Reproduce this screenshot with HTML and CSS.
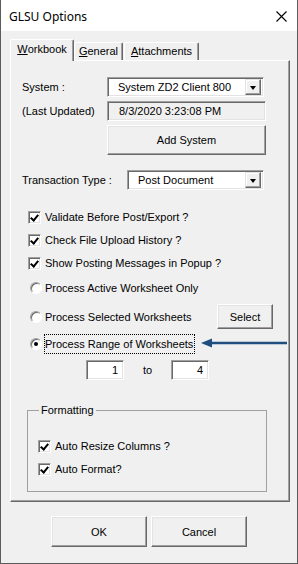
FILE: index.html
```html
<!DOCTYPE html>
<html lang="en">
<head>
  <meta charset="UTF-8" />
  <title>GLSU Options</title>
  <link rel="stylesheet" href="styles.css">
</head>
<body>
  <div class="window">
    <div class="titlebar">
      <span class="title">GLSU Options</span>
      <svg class="close" width="11" height="11" viewBox="0 0 11 11">
        <path d="M0.5 0.5 L10.5 10.5 M10.5 0.5 L0.5 10.5" stroke="#000" stroke-width="1.1" fill="none" />
      </svg>
    </div>

    <div class="client">
      <div class="tabs">
        <div class="tab active"><u>W</u>orkbook</div>
        <div class="tab tab-general"><u>G</u>eneral</div>
        <div class="tab tab-attach"><u>A</u>ttachments</div>
      </div>

      <div class="page">
        <div class="field-grid">
          <span class="label">System :</span>
          <div class="combo combo-system">
            <span class="combo-text">System ZD2 Client 800</span>
            <span class="drop"><span class="tri"></span></span>
          </div>

          <span class="label">(Last Updated)</span>
          <div class="textbox disabled">8/3/2020 3:23:08 PM</div>

          <span></span>
          <button class="btn btn-add">Add System</button>
        </div>

        <div class="trans-row">
          <span class="label trans-label">Transaction Type :</span>
          <div class="combo combo-trans">
            <span class="combo-text">Post Document</span>
            <span class="drop"><span class="tri"></span></span>
          </div>
        </div>

        <div class="options">
          <label class="opt check-row first">
            <span class="checkbox checked"></span>Validate Before Post/Export ?
          </label>
          <label class="opt check-row">
            <span class="checkbox checked"></span>Check File Upload History ?
          </label>
          <label class="opt check-row">
            <span class="checkbox checked"></span>Show Posting Messages in Popup ?
          </label>
          <label class="opt radio-row r1">
            <span class="radio"></span>Process Active Worksheet Only
          </label>
          <div class="opt radio-row r2">
            <span class="radio"></span>Process Selected Worksheets
            <button class="btn btn-select">Select</button>
          </div>
          <div class="opt radio-row r3">
            <span class="radio selected"></span><span class="focus">Process Range of Worksheets</span>
          </div>
          <div class="range-row">
            <div class="numbox">1</div>
            <span class="to">to</span>
            <div class="numbox">4</div>
          </div>
        </div>

        <fieldset class="group">
          <legend>Formatting</legend>
          <label class="opt check-row g1">
            <span class="checkbox checked"></span>Auto Resize Columns ?
          </label>
          <label class="opt check-row g2">
            <span class="checkbox checked"></span>Auto Format?
          </label>
        </fieldset>
      </div>

      <div class="actions">
        <button class="btn btn-action">OK</button>
        <button class="btn btn-action">Cancel</button>
      </div>
    </div>

    <!-- annotation arrow pointing at the selected option -->
    <svg class="arrow" width="90" height="12" viewBox="0 0 90 12">
      <path d="M8 6 L86 6" stroke="#1f4e7f" stroke-width="2.4" fill="none" />
      <polygon points="0,6 11,1.5 11,10.5" fill="#1f4e7f" />
    </svg>
  </div>
</body>
</html>
```

FILE: styles.css
```css
* {
  box-sizing: border-box;
}

html, body {
  margin: 0;
  padding: 0;
  background: #f0f0f0;
}

body {
  font-family: 'Liberation Sans', Arial, sans-serif;
  font-size: 11px;
  color: #000;
}

.window {
  position: relative;
  width: 298px;
  height: 564px;
  border: 1px solid #5c5c5c;
  border-top: none;
  background: #f0f0f0;
}

.titlebar {
  height: 31px;
  background: #fff;
  display: flex;
  align-items: center;
  justify-content: space-between;
  padding: 1px 9px 0 8px;
}

.title {
  font-family: 'Noto Sans', 'Open Sans', sans-serif;
  font-size: 12px;
}

.close {
  margin-right: 1px;
}

.client {
  padding: 8px 7px 0 9px;
}

/* tabs */
.tabs {
  display: flex;
  align-items: flex-end;
  height: 21px;
  position: relative;
  z-index: 2;
}

.tab {
  height: 18px;
  display: flex;
  align-items: center;
  justify-content: center;
  border: 1px solid;
  border-color: #fff #696969 transparent #fff;
  border-bottom: none;
  border-radius: 2px 2px 0 0;
  box-shadow: inset -1px 0 #a0a0a0;
  background: #f0f0f0;
  padding-bottom: 1px;
}

.tab.active {
  width: 64px;
  height: 22px;
  margin-bottom: -1px;
  padding-bottom: 4px;
}

.tab-general {
  width: 49px;
}

.tab-attach {
  width: 75px;
  margin-left: 1px;
}

/* tab page */
.page {
  position: relative;
  width: 280px;
  height: 442px;
  border: 1px solid;
  border-color: #fff #696969 #696969 #fff;
  box-shadow: inset -1px -1px #a0a0a0;
  padding: 16px 16px 0 11px;
}

.field-grid {
  display: grid;
  grid-template-columns: 85px auto;
  grid-template-rows: 20px 20px 30px;
  row-gap: 4px;
  align-items: center;
}

.combo, .textbox, .numbox {
  height: 20px;
  background: #fff;
  border: 1px solid;
  border-color: #a0a0a0 #fff #fff #a0a0a0;
  box-shadow: inset 1px 1px #696969, inset -1px -1px #e3e3e3;
  display: flex;
  align-items: center;
}

.combo {
  justify-content: space-between;
  padding: 0 2px 0 10px;
}

.combo-system {
  width: 157px;
}

.textbox {
  width: 159px;
  padding-left: 11px;
}

.textbox.disabled {
  background: #f0f0f0;
}

.drop {
  width: 16px;
  height: 16px;
  background: #f0f0f0;
  border: 1px solid;
  border-color: #e3e3e3 #696969 #696969 #e3e3e3;
  box-shadow: inset -1px -1px #a0a0a0, inset 1px 1px #fff;
  display: flex;
  align-items: center;
  justify-content: center;
}

.tri {
  width: 0;
  height: 0;
  border-left: 3.5px solid transparent;
  border-right: 3.5px solid transparent;
  border-top: 4px solid #000;
  margin-top: 1px;
}

.btn {
  font-family: inherit;
  font-size: 11px;
  color: #000;
  background: #f0f0f0;
  border: 1px solid;
  border-color: #fff #696969 #696969 #fff;
  box-shadow: inset -1px -1px #a0a0a0, inset 1px 1px #e3e3e3;
  padding: 0;
  border-radius: 0;
}

.btn-add {
  width: 159px;
  height: 30px;
}

.trans-row {
  display: flex;
  align-items: center;
  margin-top: 15px;
}

.trans-label {
  width: 105px;
}

.combo-trans {
  width: 137px;
}

/* check and radio options */
.options {
  display: flex;
  flex-direction: column;
  margin-top: 17px;
}

.opt {
  display: flex;
  align-items: center;
  height: 20px;
}

.check-row {
  margin-top: 3px;
  padding-left: 6px;
}

.check-row.first {
  margin-top: 0;
}

.checkbox {
  width: 13px;
  height: 13px;
  margin-right: 4px;
  background: #fff;
  border: 1px solid;
  border-color: #a0a0a0 #fff #fff #a0a0a0;
  box-shadow: inset 1px 1px #696969, inset -1px -1px #e3e3e3;
  position: relative;
}

.checkbox.checked::after {
  content: "";
  position: absolute;
  left: 3px;
  top: 1px;
  width: 3px;
  height: 6px;
  border: solid #000;
  border-width: 0 2.5px 2.5px 0;
  transform: rotate(40deg);
}

.radio-row {
  padding-left: 8px;
}

.r1 {
  margin-top: 5px;
}

.r2 {
  margin-top: 6px;
  height: 25px;
}

.r3 {
  margin-top: 5px;
}

.radio {
  width: 12px;
  height: 12px;
  margin-right: 3px;
  border-radius: 50%;
  background: #fff;
  border: 1px solid;
  border-color: #a0a0a0 #fff #fff #a0a0a0;
  box-shadow: inset 1px 1px #696969;
  display: flex;
  align-items: center;
  justify-content: center;
}

.radio.selected::after {
  content: "";
  width: 4px;
  height: 4px;
  border-radius: 50%;
  background: #000;
}

.r3 .radio {
  margin-right: 2px;
}

.focus {
  height: 20px;
  display: flex;
  align-items: center;
  padding: 0 2px 0 1px;
  outline: 1px dotted #000;
  outline-offset: -1px;
}

.btn-select {
  margin-left: auto;
  width: 56px;
  height: 25px;
}

.range-row {
  display: flex;
  align-items: center;
  margin-top: 6px;
  padding-left: 64px;
}

.numbox {
  width: 38px;
  justify-content: flex-end;
  padding-right: 5px;
}

.to {
  margin: 0 19px;
}

/* formatting group */
.group {
  margin: 24px 0 0 5px;
  width: 240px;
  height: 88px;
  border: 1px solid #a0a0a0;
  padding: 0 0 0 10px;
}

.group legend {
  padding: 0 2px;
  margin-left: 1px;
}

.group .check-row {
  padding-left: 0;
}

.g1 {
  margin-top: 20px;
}

.actions {
  display: flex;
  justify-content: center;
  gap: 4px;
  margin-top: 14px;
  margin-left: -2px;
}

.btn-action {
  width: 96px;
  height: 31px;
}

.arrow {
  position: absolute;
  left: 200px;
  top: 337px;
}
```
